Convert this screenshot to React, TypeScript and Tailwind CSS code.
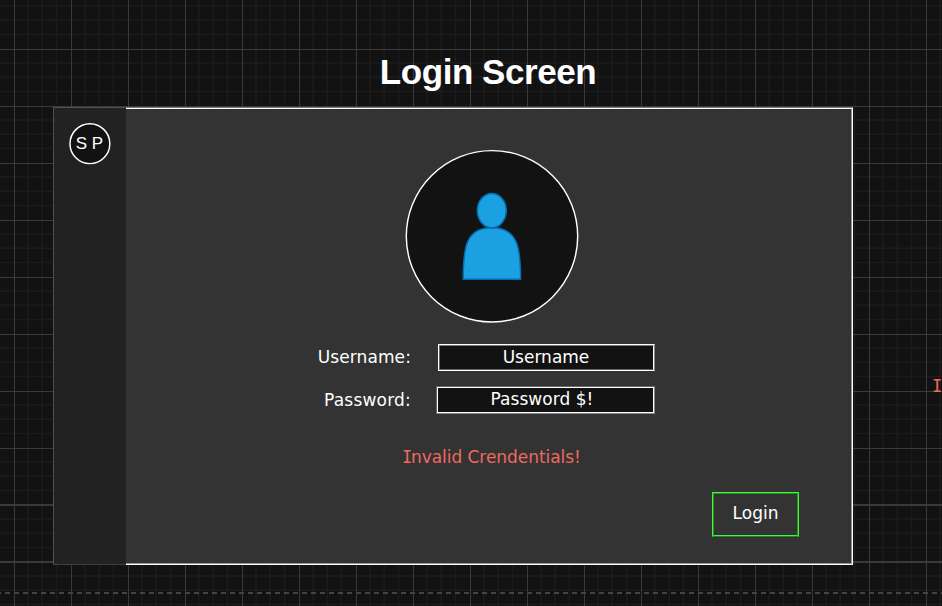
import React from "react";

const verdana = "font-['DejaVu_Sans',sans-serif]";

function Grid() {
  return (
    <svg className="absolute inset-0 h-full w-full" shapeRendering="auto">
      <defs>
        <pattern id="grid" x="14" y="49" width="57" height="57" patternUnits="userSpaceOnUse">
          <path d="M14 0V57M28.25 0V57M42.5 0V57M0 14H57M0 28.25H57M0 42.5H57" stroke="#1b1b1b" strokeWidth="1.5" />
          <path d="M.5 0V57M0 .5H57" stroke="#3a3a3a" />
        </pattern>
      </defs>
      <rect width="942" height="606" fill="url(#grid)" />
      <path d="M0 505H942M0 562H942" stroke="#3a3a3a" strokeWidth="2" />
      <path d="M-4 593H942" stroke="#444" strokeWidth="2" strokeDasharray="5 4" />
    </svg>
  );
}

function Avatar() {
  return (
    <svg className="ml-[279px] mt-[40px] block h-[174px] w-[174px]" viewBox="405 149 174 174">
      <circle cx="492" cy="236.3" r="85.7" fill="#121212" stroke="#fff" strokeWidth="1.45" />
      <path d="M463.2 279.3C463.2 247 466 227.7 491.8 227.7S520.6 247 520.6 279.3Z" fill="#1ba1e2" stroke="#006eaf" strokeWidth="1.45" />
      <ellipse cx="491.8" cy="210.6" rx="14.5" ry="17.1" fill="#1ba1e2" stroke="#006eaf" strokeWidth="1.45" />
    </svg>
  );
}

export default function App() {
  return (
    <div className={`relative h-[606px] w-[942px] overflow-hidden bg-[#121212] text-[17px] leading-[20px] text-white ${verdana}`}>
      <Grid />
      <div className="relative flex h-full flex-col pl-[53px]">
        <h1 className="h-[107px] w-[870px] pt-[52px] text-center font-['Liberation_Sans',sans-serif] text-[35px] leading-[40px] font-bold tracking-[-.45px]">Login Screen</h1>
        <div className="flex h-[458px] w-[800px]">
          <aside className="w-[73px] border-t border-b border-l border-[#505050] border-b-[#3f3f3f] bg-[#222] pl-[15px] pt-[14px] font-['Liberation_Sans',sans-serif]">
            <div className="relative flex h-[43px] w-[43px] items-center justify-center">
              <svg className="absolute inset-0" width="43" height="43">
                <circle cx="20.9" cy="21.7" r="19.9" fill="#121212" stroke="#fff" strokeWidth="1.45" />
              </svg>
              <span className="relative -left-[1px] whitespace-nowrap">S P</span>
            </div>
          </aside>
          <main className="w-[727px] border-t border-r border-b border-t-[#777] border-r-white border-b-white">
            <div className="flex h-full flex-col border-t border-r border-b border-t-white border-r-[#959595] border-b-[#959595] bg-[#333]">
              <Avatar />
              <div className="mt-[21px] flex h-[27px]">
                <label className="w-[285px] pt-[3px] text-right tracking-[.1px]">Username:</label>
                <div className="ml-[27px] h-[27px] w-[217px] border border-white border-r-[#888]">
                  <div className="h-full border border-t-[#777] border-l-[#666] border-b-[#666] border-r-white bg-[#121212] pt-[1px] pr-[1px] text-center">Username</div>
                </div>
              </div>
              <div className="mt-[15px] flex h-[28px]">
                <label className="w-[285px] pt-[4px] text-right tracking-[.2px]">Password:</label>
                <div className="ml-[25px] h-[28px] w-[219px] border border-[#666] border-r-[#888] border-b-[#888]">
                  <div className="h-full border border-white bg-[#121212] pt-[1px] pr-[7px] text-center tracking-[.05px]">Password $!</div>
                </div>
              </div>
              <p className="mt-[33px] pl-[277px] tracking-[-.05px] text-[#f06860]">
                <span className="inline-block w-[8px] -indent-[1px] font-['DejaVu_Sans_Mono',monospace]">I</span>nvalid Crendentials!
              </p>
              <button className="mt-[25px] ml-[586px] h-[45px] w-[87px] border border-[#33ff33] border-b-[#267d26]">
                <span className="block h-full border border-t-[#2e8c2e] border-l-[#2e8c2e] border-r-[#2e8c2e] border-b-[#33ff33] pt-[9px]">Login</span>
              </button>
            </div>
          </main>
        </div>
      </div>
      <span className="absolute top-[376px] left-[933px] whitespace-nowrap text-[#f06860]">
        <span className="inline-block w-[8px] -indent-[1px] font-['DejaVu_Sans_Mono',monospace]">I</span>nvalid Crendentials!
      </span>
    </div>
  );
}
